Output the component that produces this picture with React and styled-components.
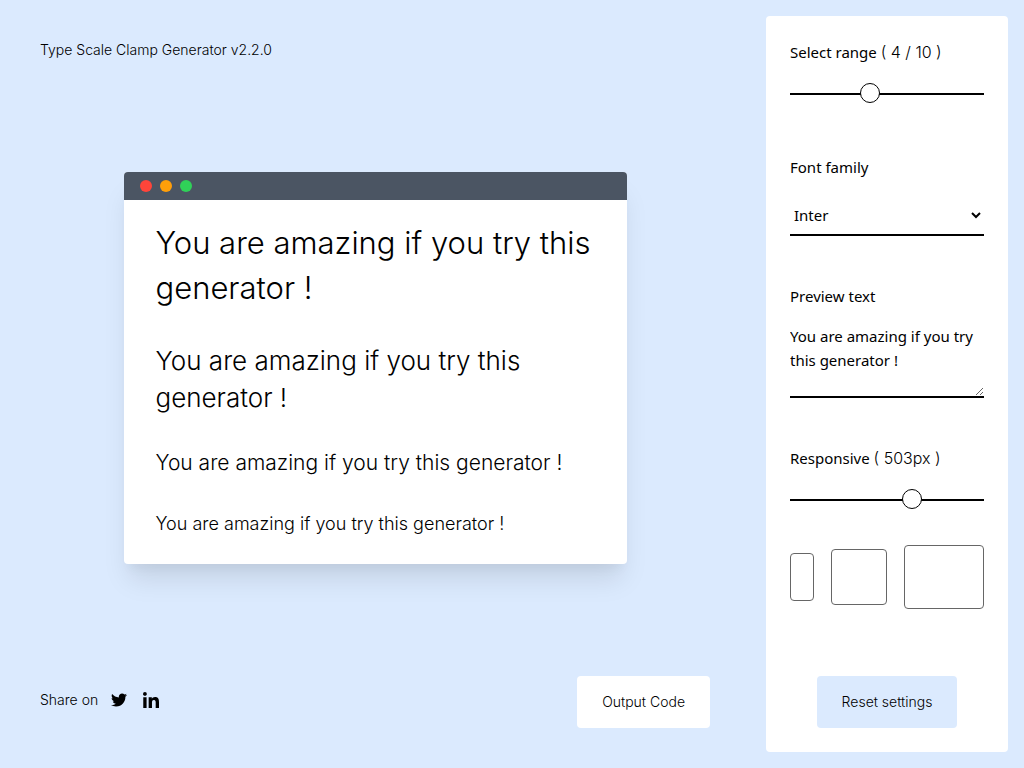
import React, { useState } from "react";
import styled, { createGlobalStyle } from "styled-components";
import { FaTwitter } from "react-icons/fa";

const DEFAULT_TEXT = "You are amazing if you try this generator !";

const GlobalStyle = createGlobalStyle`
  *, *::before, *::after { box-sizing: border-box; }
  body {
    margin: 0;
    background: #dbeafe;
    color: #000;
    font: 300 14px/20px Inter, "Liberation Sans", sans-serif;
  }
  button, input, select, textarea { font: inherit; color: inherit; margin: 0; }
`;

const Page = styled.div`
  display: flex;
  gap: 32px;
  min-height: 100vh;
  padding: 16px;
`;

const Main = styled.main`
  flex: 1;
  min-width: 0;
  padding: 24px;
  display: flex;
  flex-direction: column;
  justify-content: space-between;
`;

const Title = styled.h1`
  margin: 0;
  font: inherit;
`;

const Preview = styled.section`
  align-self: center;
  max-width: 100%;
  border-radius: 4px;
  overflow: hidden;
  background: #fff;
  box-shadow: 0 20px 25px -5px rgba(0, 0, 0, 0.1), 0 10px 10px -5px rgba(0, 0, 0, 0.04);
`;

const TitleBar = styled.div`
  display: flex;
  align-items: center;
  gap: 8px;
  height: 28px;
  padding: 0 16px;
  background: #4b5563;
`;

const Dot = styled.span`
  width: 12px;
  height: 12px;
  border-radius: 50%;
  background: ${(p) => p.$color};
`;

const Samples = styled.div`
  display: flex;
  flex-direction: column;
  gap: 32px;
  padding: 20px 32px 26px;
`;

const Sample = styled.p`
  margin: 0;
  font-size: ${(p) => p.$size}px;
  line-height: ${(p) => p.$line}px;
`;

const Footer = styled.footer`
  display: flex;
  align-items: center;
  justify-content: space-between;
`;

const Share = styled.div`
  display: flex;
  align-items: center;
  gap: 13px;
  padding-bottom: 4px;
`;

const ShareLink = styled.a`
  display: flex;
  color: #000;
  font-size: 16px;
  & + & { margin-left: 3px; }
`;

const Button = styled.button`
  align-self: center;
  padding: 16px 25px;
  border: 0;
  border-radius: 4px;
  background: ${(p) => (p.$tinted ? "#dbeafe" : "#fff")};
  cursor: pointer;
`;

const Sidebar = styled.aside`
  flex: 0 0 242px;
  display: flex;
  flex-direction: column;
  gap: 48px;
  padding: 24px;
  border-radius: 4px;
  background: #fff;
  font: 400 15px/24px "Noto Sans", "Open Sans", sans-serif;
`;

const Field = styled.div`
  display: flex;
  flex-direction: column;
  gap: 16px;
`;

const Label = styled.label`
  height: 24px;
  white-space: nowrap;
`;

const Value = styled.span`
  font: 300 16px/24px Inter, "Liberation Sans", sans-serif;
`;

const Range = styled.input.attrs({ type: "range" })`
  appearance: none;
  width: 100%;
  height: 27px;
  background: transparent;
  &::-webkit-slider-runnable-track {
    height: 2px;
    background: #000;
  }
  &::-webkit-slider-thumb {
    appearance: none;
    width: 20px;
    height: 20px;
    margin-top: -10px;
    border: 1px solid #000;
    border-radius: 50%;
    background: #fff;
  }
`;

const Select = styled.select`
  width: 100%;
  height: 41px;
  border: 0;
  border-bottom: 2px solid #000;
  background: #fff;
`;

const TextArea = styled.textarea`
  display: block;
  width: 100%;
  height: 74px;
  padding: 0;
  border: 0;
  border-bottom: 2px solid #000;
  background: #fff;
  resize: vertical;
`;

const Devices = styled.div`
  display: flex;
  align-items: center;
  justify-content: space-between;
  margin-top: 16px;
`;

const Device = styled.button`
  width: ${(p) => p.$w}px;
  height: ${(p) => p.$h}px;
  padding: 0;
  border: 1px solid #666;
  border-radius: 4px;
  background: #fff;
`;

const ResetRow = styled.div`
  display: flex;
  justify-content: center;
  margin-top: auto;
  font: 300 14px/20px Inter, "Liberation Sans", sans-serif;
`;

const SCALE = [
  { size: 31, line: 45 },
  { size: 26, line: 37 },
  { size: 21, line: 30 },
  { size: 18, line: 28 },
];

function LinkedInIcon() {
  return (
    <svg width="16" height="16" viewBox="0 0 448 448" fill="currentColor" aria-hidden="true">
      <path d="M100.28 448H7.4V148.9h92.88zM53.79 108.1C24.09 108.1 0 83.5 0 53.8a53.79 53.79 0 0 1 107.58 0c0 29.7-24.1 54.3-53.79 54.3zM447.9 448h-92.68V302.4c0-34.7-.7-79.2-48.29-79.2-48.29 0-55.69 37.7-55.69 76.7V448h-92.78V148.9h89.08v40.8h1.3c12.4-23.5 42.69-48.3 87.88-48.3 94 0 111.28 61.9 111.28 142.3V448z" />
    </svg>
  );
}

export default function App() {
  const [range, setRange] = useState(4);
  const [family, setFamily] = useState("Inter");
  const [text, setText] = useState(DEFAULT_TEXT);
  const [width, setWidth] = useState(503);

  const reset = () => {
    setRange(4);
    setFamily("Inter");
    setText(DEFAULT_TEXT);
    setWidth(503);
  };

  return (
    <Page>
      <GlobalStyle />
      <Main>
        <Title>Type Scale Clamp Generator v2.2.0</Title>
        <Preview style={{ width, fontFamily: family }}>
          <TitleBar>
            <Dot $color="#ff453a" />
            <Dot $color="#ff9f0a" />
            <Dot $color="#30d158" />
          </TitleBar>
          <Samples>
            {SCALE.slice(0, range).map((s) => (
              <Sample key={s.size} $size={s.size} $line={s.line}>{text}</Sample>
            ))}
          </Samples>
        </Preview>
        <Footer>
          <Share>
            <span>Share on</span>
            <ShareLink href="#twitter" aria-label="Twitter"><FaTwitter /></ShareLink>
            <ShareLink href="#linkedin" aria-label="LinkedIn"><LinkedInIcon /></ShareLink>
          </Share>
          <Button type="button">Output Code</Button>
        </Footer>
      </Main>
      <Sidebar>
        <Field>
          <Label htmlFor="range">Select range <Value>( {range} / 10 )</Value></Label>
          <Range id="range" min="0" max="10" value={range} onChange={(e) => setRange(+e.target.value)} />
        </Field>
        <Field>
          <Label htmlFor="family">Font family</Label>
          <Select id="family" value={family} onChange={(e) => setFamily(e.target.value)}>
            <option>Inter</option>
            <option>Roboto</option>
            <option>Lato</option>
          </Select>
        </Field>
        <Field>
          <Label htmlFor="text">Preview text</Label>
          <TextArea id="text" value={text} onChange={(e) => setText(e.target.value)} />
        </Field>
        <Field>
          <Label htmlFor="width">Responsive <Value>( {width}px )</Value></Label>
          <Range id="width" min="200" max="670" value={width} onChange={(e) => setWidth(+e.target.value)} />
          <Devices>
            <Device type="button" aria-label="Phone" $w={24} $h={48} onClick={() => setWidth(320)} />
            <Device type="button" aria-label="Tablet" $w={56} $h={56} onClick={() => setWidth(503)} />
            <Device type="button" aria-label="Desktop" $w={80} $h={64} onClick={() => setWidth(670)} />
          </Devices>
        </Field>
        <ResetRow>
          <Button type="button" $tinted onClick={reset}>Reset settings</Button>
        </ResetRow>
      </Sidebar>
    </Page>
  );
}
